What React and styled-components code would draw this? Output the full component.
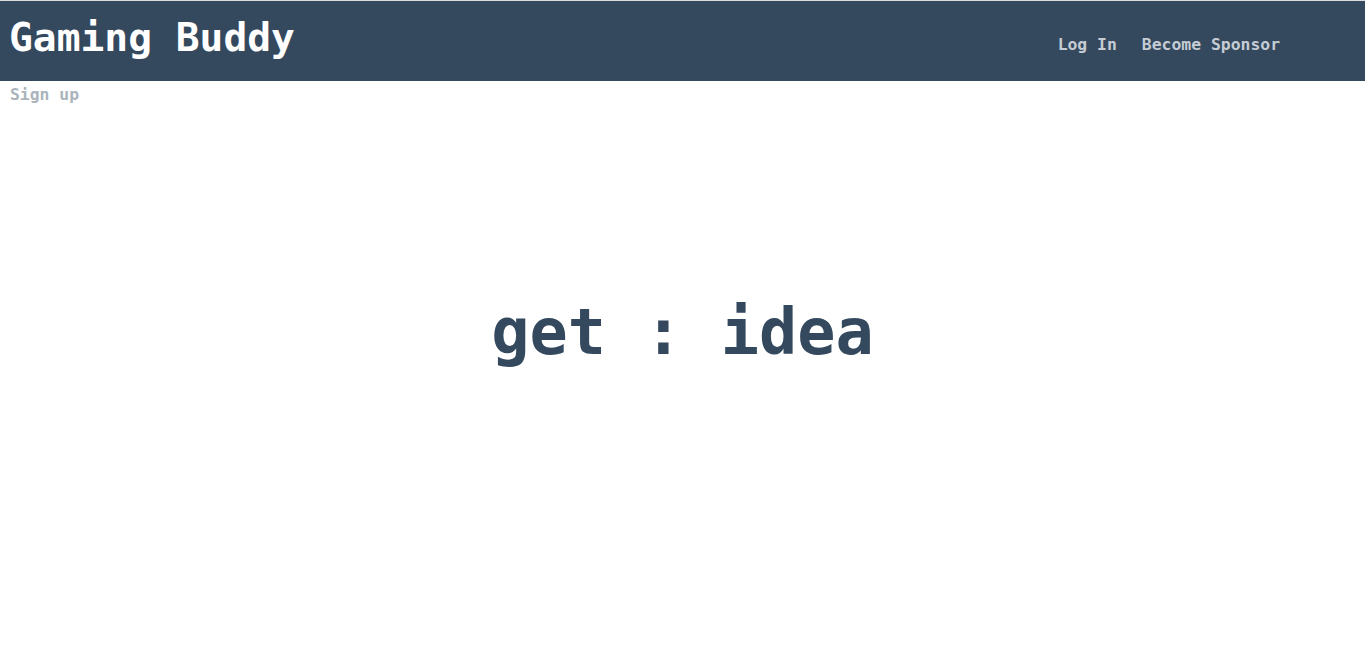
import React from 'react';
import styled, { createGlobalStyle } from 'styled-components';

const GlobalStyle = createGlobalStyle`
  body {
    margin: 0;
    background: #fff;
    font-family: "DejaVu Sans Mono", "Liberation Mono", monospace;
  }
`;

const Page = styled.div`
  border-top: 1px solid #dcdcdc;
  min-height: 657px;
  display: flex;
  flex-direction: column;
`;

const Header = styled.header`
  height: 80px;
  background-color: #34495e;
  display: flex;
  align-items: flex-start;
  padding: 0 10px 0 9px;
`;

const Title = styled.h1`
  margin: 13px 0 0;
  font-size: 39.6px;
  font-weight: bold;
  color: #fff;
  flex: 1;
  line-height: 46px;
`;

const Nav = styled.nav`
  display: flex;
  gap: 25px;
  margin: 34px 75px 0 0;
`;

const NavLink = styled.a`
  font-size: 16.4px;
  font-weight: bold;
  color: ${(p) => (p.muted ? '#abb4bd' : '#c5ccd3')};
  text-decoration: none;
  line-height: 20px;
  cursor: pointer;
`;

const SubBar = styled.div`
  padding: 4px 10px 0;
`;

const Content = styled.main`
  flex: 1;
  display: flex;
  justify-content: center;
  padding-top: 189px;
`;

const Headline = styled.h2`
  margin: 0;
  font-size: 63.5px;
  font-weight: bold;
  color: #34495e;
  white-space: pre;
  line-height: 76px;
`;

function App() {
  return (
    <>
      <GlobalStyle />
      <Page>
        <Header>
          <Title>Gaming Buddy</Title>
          <Nav>
            <NavLink>Log In</NavLink>
            <NavLink>Become Sponsor</NavLink>
          </Nav>
        </Header>
        <SubBar>
          <NavLink muted>Sign up</NavLink>
        </SubBar>
        <Content>
          <Headline>get : idea</Headline>
        </Content>
      </Page>
    </>
  );
}

export default App;
